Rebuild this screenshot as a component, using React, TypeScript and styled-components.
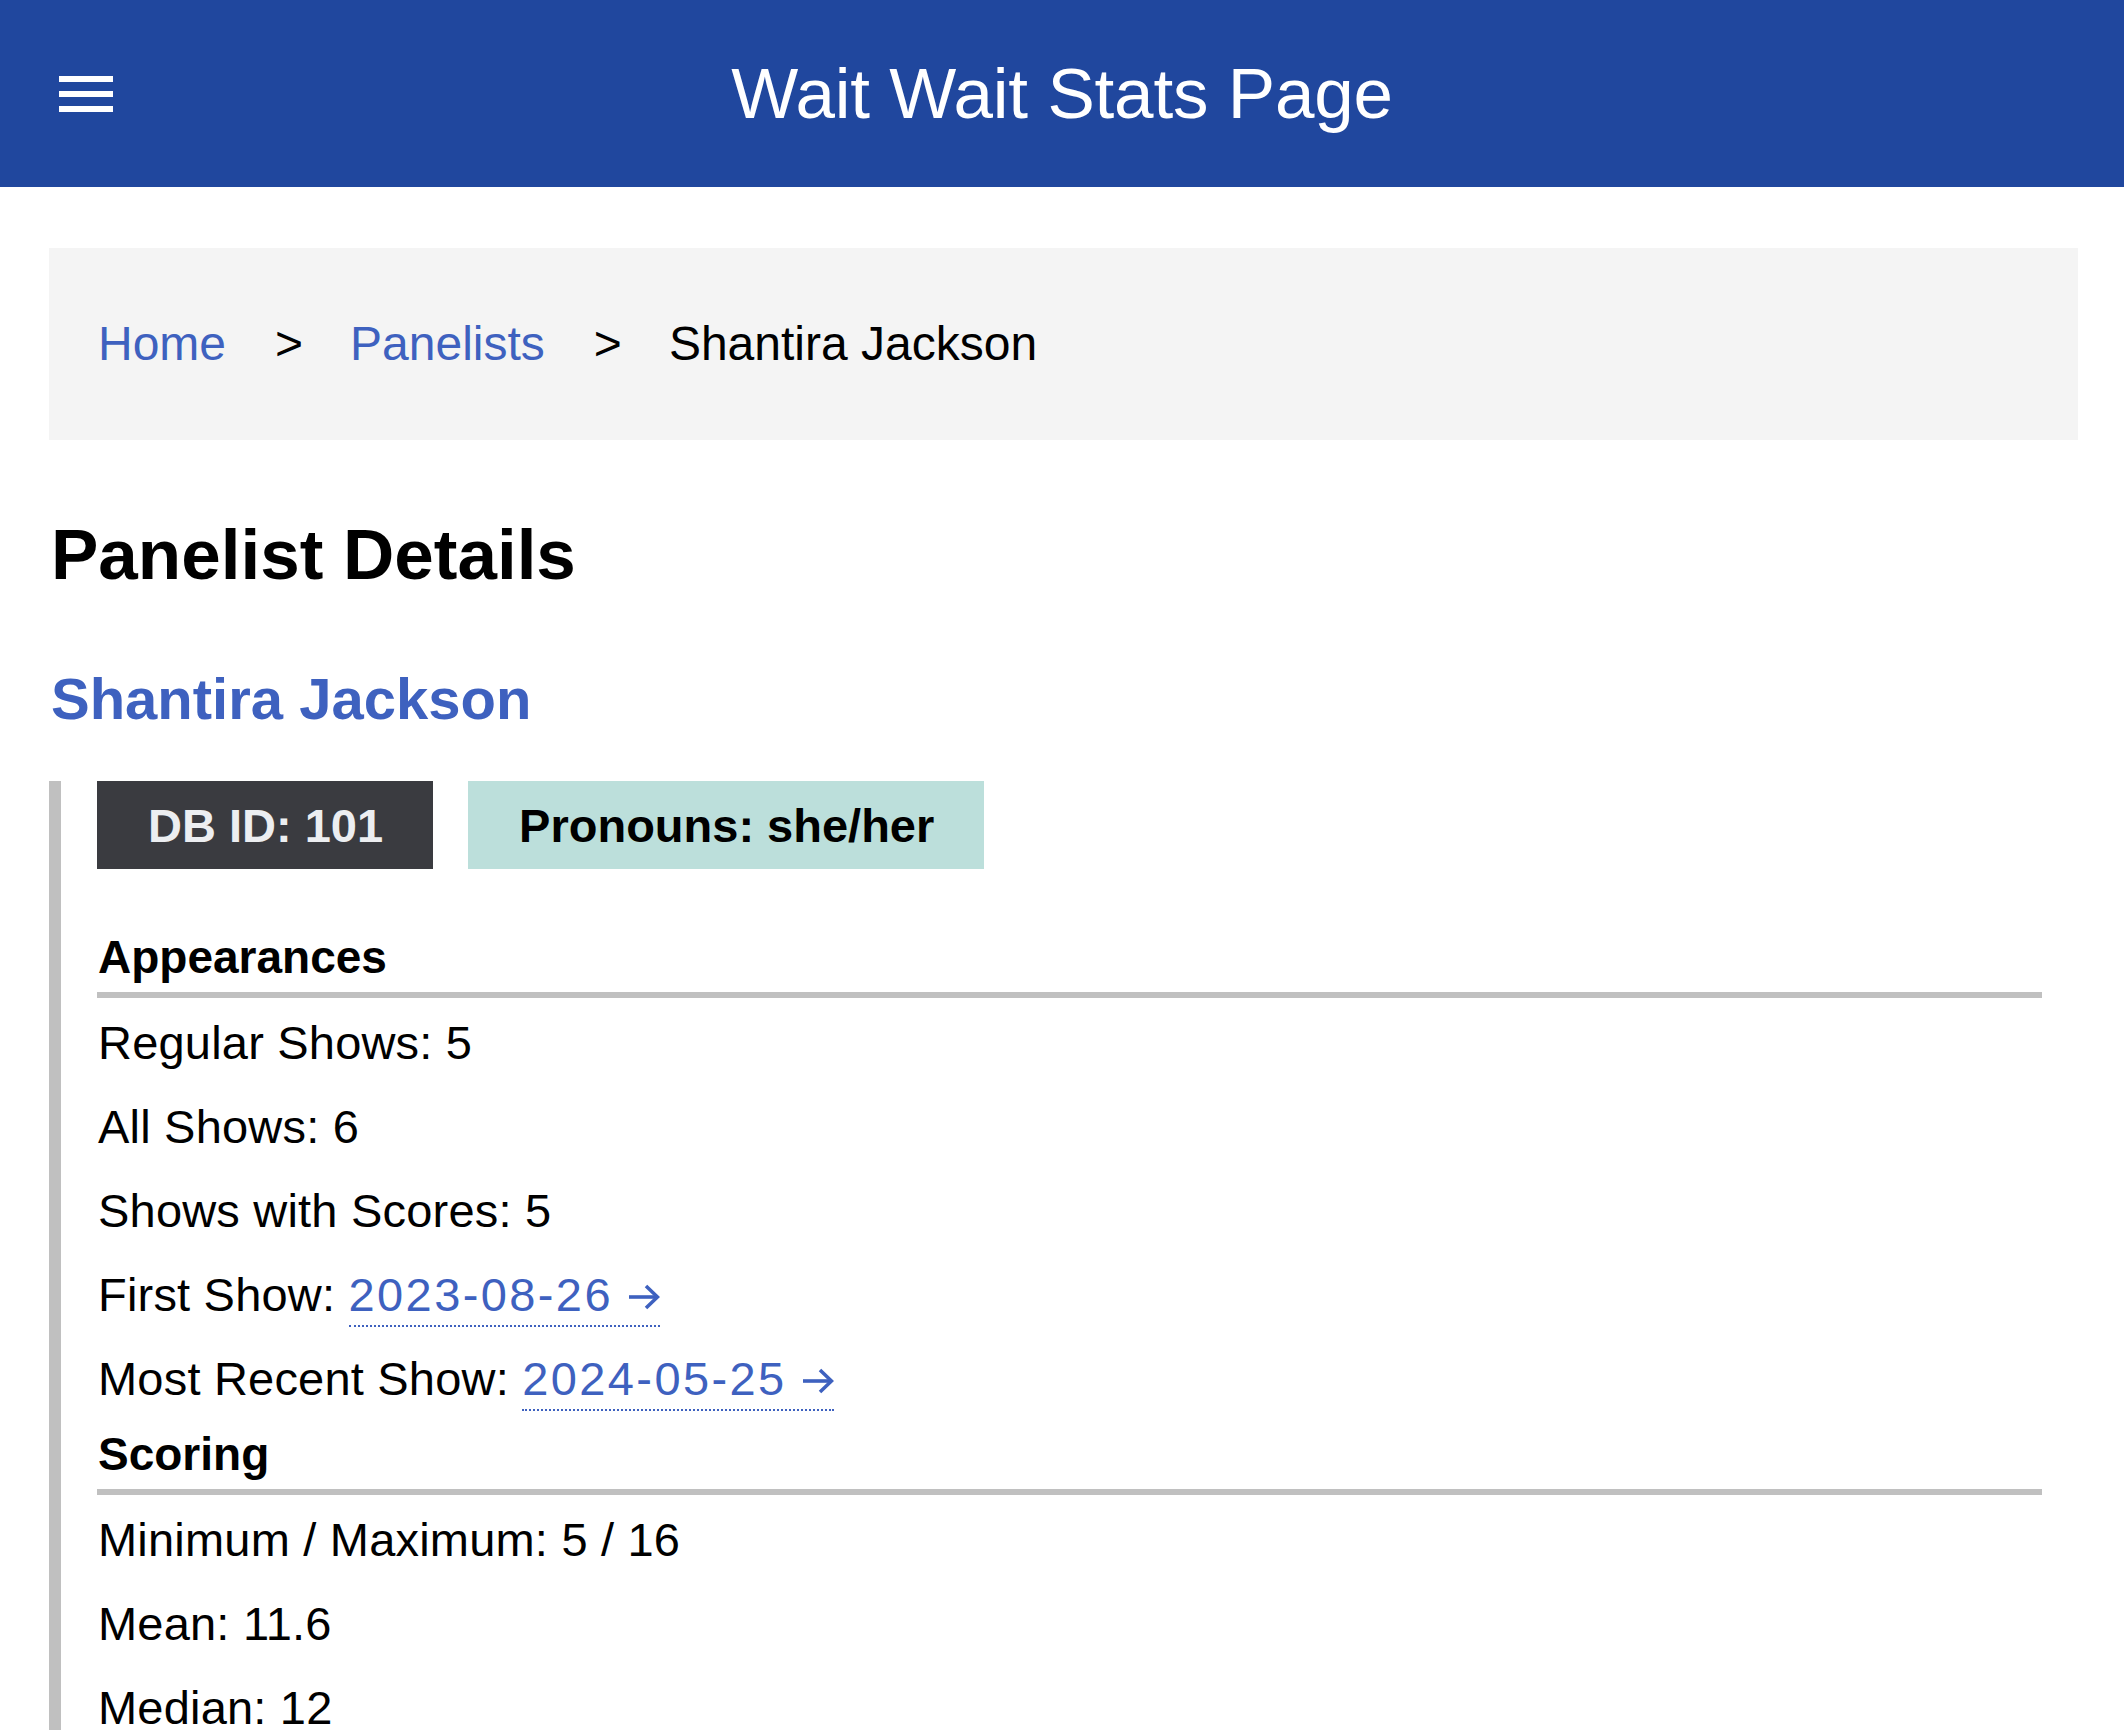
import React from "react";
import styled, { createGlobalStyle } from "styled-components";

const GlobalStyle = createGlobalStyle`
  html, body {
    margin: 0;
    padding: 0;
    background: #ffffff;
    color: #000000;
    font-family: "Liberation Sans", Arial, sans-serif;
  }
  * { box-sizing: border-box; }
`;

const Header = styled.header`
  height: 187px;
  background: #20479e;
  display: grid;
  grid-template-columns: 1fr auto 1fr;
  align-items: center;
  padding: 0 59px;
`;

const MenuButton = styled.button`
  justify-self: start;
  display: flex;
  flex-direction: column;
  gap: 9px;
  padding: 0;
  border: 0;
  background: transparent;
  cursor: pointer;
`;

const MenuBar = styled.span`
  display: block;
  width: 54px;
  height: 6px;
  background: #ffffff;
`;

const Title = styled.h1`
  margin: 0;
  color: #ffffff;
  font-size: 71px;
  font-weight: 400;
  line-height: 1;
  letter-spacing: -0.2px;
`;

const Main = styled.main`
  padding: 61px 46px 0 49px;
`;

const Breadcrumb = styled.nav`
  height: 192px;
  background: #f4f4f4;
  display: flex;
  align-items: center;
  padding-left: 49px;
  font-size: 48px;
  line-height: 1;
`;

const Crumb = styled.a<{ $current?: boolean }>`
  color: ${(p) => (p.$current ? "#000000" : "#3e61bf")};
  text-decoration: none;
`;

const Separator = styled.span`
  padding: 0 47px 0 49px;
  color: #000000;
`;

const PageTitle = styled.h2`
  margin: 72px 0 0 2px;
  font-size: 71px;
  font-weight: 700;
  line-height: 1.2;
`;

const PanelistName = styled.h3`
  margin: 67px 0 56px 2px;
  font-size: 58px;
  font-weight: 700;
  line-height: 1.2;
  color: #3e61bf;
`;

const Details = styled.section`
  border-left: 12px solid #c0c0c0;
  padding: 0 36px 200px 36px;
`;

const BadgeRow = styled.div`
  display: flex;
  gap: 35px;
  margin-top: -9px;
`;

const Badge = styled.span<{ $variant: "dark" | "teal" }>`
  display: inline-flex;
  align-items: center;
  height: 88px;
  padding: 2px 50px 0 51px;
  font-size: 47px;
  font-weight: 700;
  line-height: 1;
  background: ${(p) => (p.$variant === "dark" ? "#3a3b40" : "#bcdfdb")};
  color: ${(p) => (p.$variant === "dark" ? "#eceef1" : "#000000")};
`;

const SectionTitle = styled.h4<{ $first?: boolean }>`
  margin: ${(p) => (p.$first ? "62px" : "7px")} 0 0 0;
  padding: 0 0 8px 1px;
  font-size: 46px;
  font-weight: 700;
  line-height: 1.15;
  border-bottom: 6px solid #c0c0c0;
`;

const StatList = styled.ul`
  list-style: none;
  margin: 3px 0 0 0;
  padding: 0 0 0 1px;
`;

const Stat = styled.li`
  font-size: 47px;
  line-height: 84px;
  height: 84px;
  letter-spacing: 0.2px;
`;

const ShowLink = styled.a`
  display: inline-flex;
  align-items: baseline;
  gap: 14px;
  line-height: 1.15;
  color: #3e61bf;
  text-decoration: none;
  padding-bottom: 3px;
  border-bottom: 2px dotted #3e61bf;
  letter-spacing: 2.4px;
`;

const Arrow = styled.svg`
  width: 33px;
  height: 26px;
  align-self: center;
  margin-top: 4px;
`;

function ArrowIcon() {
  return (
    <Arrow viewBox="0 0 33 26" fill="none" stroke="#3e61bf" strokeWidth="3.6">
      <path d="M2 13 H30" />
      <path d="M19 2 L30.5 13 L19 24" />
    </Arrow>
  );
}

export default function App() {
  return (
    <>
      <GlobalStyle />
      <Header>
        <MenuButton aria-label="Menu">
          <MenuBar />
          <MenuBar />
          <MenuBar />
        </MenuButton>
        <Title>Wait Wait Stats Page</Title>
        <span />
      </Header>
      <Main>
        <Breadcrumb>
          <Crumb href="#">Home</Crumb>
          <Separator>&gt;</Separator>
          <Crumb href="#">Panelists</Crumb>
          <Separator>&gt;</Separator>
          <Crumb $current>Shantira Jackson</Crumb>
        </Breadcrumb>
        <PageTitle>Panelist Details</PageTitle>
        <PanelistName>Shantira Jackson</PanelistName>
        <Details>
          <BadgeRow>
            <Badge $variant="dark">DB ID: 101</Badge>
            <Badge $variant="teal">Pronouns: she/her</Badge>
          </BadgeRow>
          <SectionTitle $first>Appearances</SectionTitle>
          <StatList>
            <Stat>Regular Shows: 5</Stat>
            <Stat>All Shows: 6</Stat>
            <Stat>Shows with Scores: 5</Stat>
            <Stat>
              First Show:{" "}
              <ShowLink href="#">
                2023-08-26
                <ArrowIcon />
              </ShowLink>
            </Stat>
            <Stat>
              Most Recent Show:{" "}
              <ShowLink href="#">
                2024-05-25
                <ArrowIcon />
              </ShowLink>
            </Stat>
          </StatList>
          <SectionTitle>Scoring</SectionTitle>
          <StatList>
            <Stat>Minimum / Maximum: 5 / 16</Stat>
            <Stat>Mean: 11.6</Stat>
            <Stat>Median: 12</Stat>
          </StatList>
        </Details>
      </Main>
    </>
  );
}
